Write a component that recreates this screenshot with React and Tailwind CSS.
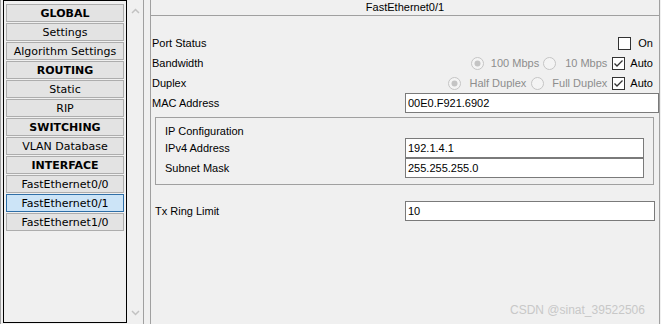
import React from "react";

const items = [
  { t: "GLOBAL", h: true },
  { t: "Settings" },
  { t: "Algorithm Settings" },
  { t: "ROUTING", h: true },
  { t: "Static" },
  { t: "RIP" },
  { t: "SWITCHING", h: true },
  { t: "VLAN Database" },
  { t: "INTERFACE", h: true },
  { t: "FastEthernet0/0" },
  { t: "FastEthernet0/1", sel: true },
  { t: "FastEthernet1/0" },
];

function Radio({ sel }) {
  return (
    <svg width="13" height="13" viewBox="0 0 13 13" className="shrink-0">
      <circle cx="6.5" cy="6.5" r="6" fill="#f4f4f4" stroke="#c4c4c4" />
      {sel && <circle cx="6.5" cy="6.5" r="3" fill="#c4c4c4" />}
    </svg>
  );
}

function Check({ on }) {
  return (
    <svg width="13" height="13" viewBox="0 0 13 13" className="shrink-0">
      <rect x="0.5" y="0.5" width="12" height="12" fill="#ffffff" stroke="#333333" />
      {on && (
        <path d="M2.5 6.5 L5 9 L10.5 3.5" fill="none" stroke="#333333" strokeWidth="1.3" />
      )}
    </svg>
  );
}

export default function App() {
  return (
    <div className="relative w-[661px] h-[324px] overflow-hidden bg-[#f0f0f0] flex">
      {/* Left pane */}
      <div className="w-[144px] h-full border-l border-r border-[#a0a0a0] flex pl-[2px]">
        <div className="w-[124px] h-[323px] border border-black flex flex-col gap-[1px] pt-[3px] pl-[2px] font-['DejaVu_Sans',Verdana,sans-serif] text-[11px] text-black">
          {items.map((it) => (
            <div
              key={it.t}
              className={
                "w-[118px] h-[18px] border flex items-center justify-center leading-none " +
                (it.sel
                  ? "bg-[#cce4f7] border-[#2f6fa8]"
                  : "bg-[#e3e3e3] border-[#adadad]") +
                (it.h ? " font-bold" : "")
              }
            >
              {it.t}
            </div>
          ))}
        </div>
        <div className="flex-1 flex flex-col items-center justify-between pt-[8px] pb-[8px]">
          <svg width="9" height="6" viewBox="0 0 9 6">
            <path d="M1 5 L4.5 1.5 L8 5" fill="none" stroke="#c2c2c2" strokeWidth="1.5" />
          </svg>
          <svg width="9" height="6" viewBox="0 0 9 6">
            <path d="M1 1 L4.5 4.5 L8 1" fill="none" stroke="#c2c2c2" strokeWidth="1.5" />
          </svg>
        </div>
      </div>
      <div className="w-[6px] shrink-0" />
      {/* Right pane */}
      <div className="w-[510px] h-full border-l border-r border-[#a0a0a0] flex flex-col font-['Liberation_Sans',Arial,sans-serif] text-[11px] text-black">
        <div className="h-[16px] border-b border-[#a0a0a0] flex items-center justify-center leading-none">
          FastEthernet0/1
        </div>
        <div className="flex flex-col pt-[17px]">
          <div className="h-[20px] flex items-center pl-[1px] pr-[6px]">
            <span className="flex-1">Port Status</span>
            <Check on={false} />
            <span className="ml-[7px]">On</span>
          </div>
          <div className="h-[20px] flex items-center pl-[1px] pr-[6px]">
            <span className="flex-1">Bandwidth</span>
            <Radio sel />
            <span className="ml-[7px] text-[#8d8d8d]">100 Mbps</span>
            <span className="ml-[4px]"><Radio /></span>
            <span className="ml-[9px] text-[#8d8d8d]">10 Mbps</span>
            <span className="ml-[5px]"><Check on /></span>
            <span className="ml-[5px]">Auto</span>
          </div>
          <div className="h-[20px] flex items-center pl-[1px] pr-[6px]">
            <span className="flex-1">Duplex</span>
            <Radio sel />
            <span className="ml-[8px] text-[#8d8d8d]">Half Duplex</span>
            <span className="ml-[5px]"><Radio /></span>
            <span className="ml-[8px] text-[#8d8d8d]">Full Duplex</span>
            <span className="ml-[5px]"><Check on /></span>
            <span className="ml-[5px]">Auto</span>
          </div>
          <div className="h-[20px] flex items-center pl-[1px]">
            <span className="flex-1">MAC Address</span>
            <div className="w-[254px] h-[20px] border border-[#7a7a7a] bg-white flex items-center pl-[2px]">
              00E0.F921.6902
            </div>
          </div>

          <div className="mt-[4px] ml-[4px] mr-[5px] border border-[#a0a0a0] flex flex-col pt-[6px] pb-[6px]">
            <div className="h-[14px] leading-[14px] pl-[9px]">IP Configuration</div>
            <div className="h-[20px] flex items-center pl-[9px] pr-[9px]">
              <span className="flex-1">IPv4 Address</span>
              <div className="w-[239px] h-[20px] border border-[#7a7a7a] bg-white flex items-center pl-[2px]">
                192.1.4.1
              </div>
            </div>
            <div className="h-[20px] flex items-center pl-[9px] pr-[9px]">
              <span className="flex-1">Subnet Mask</span>
              <div className="w-[239px] h-[20px] border border-[#7a7a7a] bg-white flex items-center pl-[2px]">
                255.255.255.0
              </div>
            </div>
          </div>

          <div className="mt-[16px] h-[20px] flex items-center pl-[4px] pr-[4px]">
            <span className="flex-1">Tx Ring Limit</span>
            <div className="w-[250px] h-[20px] border border-[#7a7a7a] bg-white flex items-center pl-[2px]">
              10
            </div>
          </div>
        </div>
      </div>
      <div className="absolute left-[510px] top-[303px] text-[12px] leading-[14px] text-[#c8c8c8] font-['Liberation_Sans',Arial,sans-serif]">
        CSDN @sinat_39522506
      </div>
    </div>
  );
}
